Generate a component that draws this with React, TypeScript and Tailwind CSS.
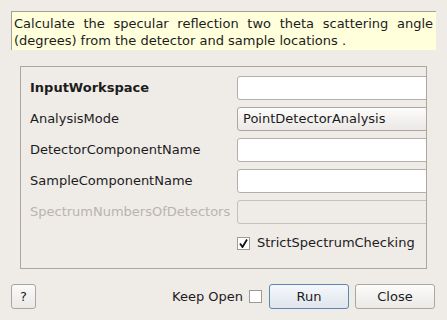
import React from "react"

const font = { fontFamily: '"DejaVu Sans", Verdana, sans-serif' }

interface Field {
  label: string
  kind: "text" | "combo" | "disabled"
  bold?: boolean
  disabled?: boolean
  value?: string
}

const fields: Field[] = [
  { label: "InputWorkspace", kind: "text", bold: true },
  { label: "AnalysisMode", kind: "combo", value: "PointDetectorAnalysis" },
  { label: "DetectorComponentName", kind: "text" },
  { label: "SampleComponentName", kind: "text" },
  { label: "SpectrumNumbersOfDetectors", kind: "disabled", disabled: true },
]

function CheckMark() {
  return (
    <svg width="9" height="9" viewBox="0 0 9 9">
      <path d="M1 4.5 L3.5 8 L8 0.5" fill="none" stroke="#111" strokeWidth="1.8" />
    </svg>
  )
}

export default function App() {
  const inputClass = (kind: Field["kind"]) => {
    switch (kind) {
      case "combo":
        return "bg-gradient-to-b from-[#fdfcfc] to-[#ebe8e5] border-[#aaa6a2]"
      case "disabled":
        return "bg-[#efebe7] border-[#c4c0bc]"
      default:
        return "bg-white border-[#b3afab]"
    }
  }

  return (
    <div className="w-[447px] h-[320px] bg-[#efebe7] text-[13px] text-[#2e3436] overflow-hidden flex flex-col" style={font}>
      <div className="mx-[11px] mt-[11px] h-[39px] bg-[#ffffdc] border-t border-l border-[#a3a09c] pl-[2px] pr-[3px] pt-[3px] leading-[17px] text-justify text-[#1c1c1c]">
        Calculate the specular reflection two theta scattering angle (degrees) from the detector and sample locations .
      </div>

      <div className="ml-[20px] mr-[20px] mt-[16px] h-[203px] border border-[#aaa6a2] overflow-hidden pl-[9px] pt-[9px]">
        <div className="flex flex-col gap-[7px]">
          {fields.map((f) => (
            <div key={f.label} className="flex items-center h-[24px]">
              <div className={`w-[207px] shrink-0 ${f.bold ? "font-bold" : ""} ${f.disabled ? "text-[#b8b4b0]" : "text-[#1c1c1c]"}`}>
                {f.label}
              </div>
              <div className={`w-[220px] shrink-0 h-[24px] border rounded-[3px] pl-[5px] flex items-center text-[#1c1c1c] ${inputClass(f.kind)}`}>
                {f.value}
              </div>
            </div>
          ))}
          <div className="flex items-center h-[14px] mt-[5px] pl-[207px]">
            <div className="w-[13px] h-[13px] bg-white border border-[#9e9a96] flex items-center justify-center">
              <CheckMark />
            </div>
            <span className="ml-[7px] text-[#1c1c1c]">StrictSpectrumChecking</span>
          </div>
        </div>
      </div>

      <div className="flex items-center mt-[15px] pl-[11px] pr-[12px] h-[25px]">
        <div className="w-[25px] h-[25px] border border-[#aaa6a2] rounded-[3px] bg-gradient-to-b from-[#fafafa] to-[#ebe8e5] flex items-center justify-center text-[#1c1c1c]">
          ?
        </div>
        <span className="ml-auto text-[#1c1c1c]">Keep Open</span>
        <div className="ml-[6px] w-[13px] h-[13px] bg-white border border-[#9e9a96]" />
        <div className="ml-[7px] w-[80px] h-[25px] border border-[#5b87b4] rounded-[3px] bg-gradient-to-b from-[#f5f8fb] to-[#dfe5ec] flex items-center justify-center text-[#1c1c1c]">
          Run
        </div>
        <div className="ml-[6px] w-[80px] h-[25px] border border-[#aaa6a2] rounded-[3px] bg-gradient-to-b from-[#fcfcfb] to-[#ebe8e5] flex items-center justify-center text-[#1c1c1c]">
          Close
        </div>
      </div>
    </div>
  )
}
